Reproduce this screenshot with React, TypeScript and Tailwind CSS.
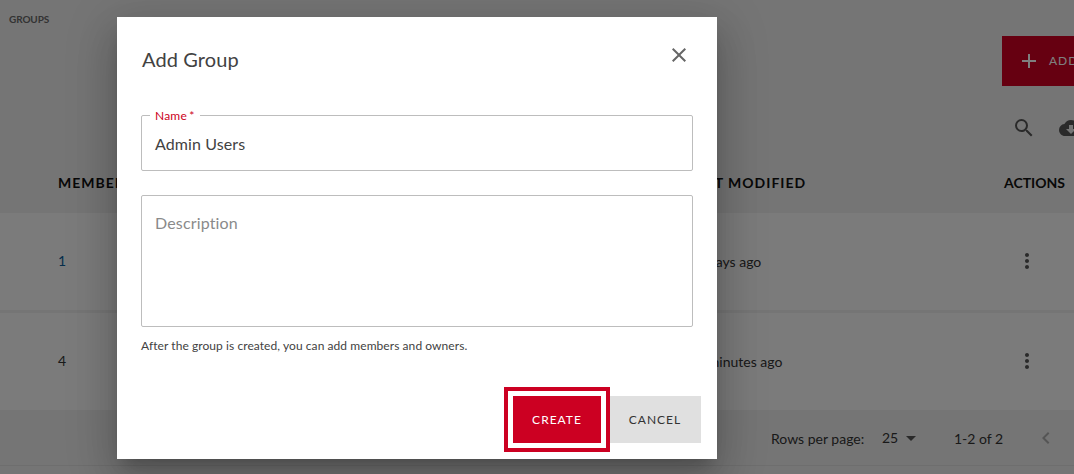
import { MdAdd, MdClose, MdCloudDownload, MdMoreVert, MdSearch, MdArrowDropDown, MdChevronLeft } from "react-icons/md";

const font = { fontFamily: '"Lato", sans-serif' };

function Row({ count, countClass, modified }: { count: string; countClass: string; modified: string }) {
  return (
    <div className="flex h-[97px] items-center bg-[#f7f7f7] pl-[58px] text-sm text-[#333]">
      <div className={`mb-[2px] w-[630px] ${countClass}`}>{count}</div>
      <div className="w-[327px]">{modified}</div>
      <MdMoreVert className="mb-[2px] size-6 text-[#555]" />
    </div>
  );
}

export default function App() {
  return (
    <div className="relative h-[474px] w-[1074px] overflow-hidden bg-[#ebebeb]" style={font}>
      <div className="flex h-[213px] flex-col">
        <div className="pl-[9px] pt-[13px] text-[10px] font-bold leading-[12px] tracking-[-0.1px] text-[#666]">GROUPS</div>
        <div className="ml-[1002px] mt-[11px] flex h-[50px] w-[140px] shrink-0 items-center bg-[#cc0022] pl-[15px] text-xs tracking-[1px] text-white">
          <MdAdd className="size-6 shrink-0" />
          <span className="ml-2">ADD GROUP</span>
        </div>
        <div className="ml-[1012px] mt-[30px] flex shrink-0 gap-[23px] text-[#555]">
          <MdSearch className="size-6 shrink-0" />
          <MdCloudDownload className="size-6 shrink-0" />
        </div>
        <div className="mt-[33px] flex pl-[58px] text-sm font-bold leading-[20px] text-[#111]">
          <div className="w-[629px] tracking-[1px]">MEMBERS</div>
          <div className="w-[317px] tracking-[1px]">LAST MODIFIED</div>
          <div>ACTIONS</div>
        </div>
      </div>
      <Row count="1" countClass="text-[#0a5a96]" modified="12 days ago" />
      <div className="h-[3px]" />
      <Row count="4" countClass="text-[#333]" modified="20 minutes ago" />
      <div className="flex h-[56px] items-center border-b border-[#dcdcdc] pl-[771px] pt-[2px] text-sm text-[#333]">
        <span className="w-[111px]">Rows per page:</span>
        <span className="mb-[2px] w-[18px]">25</span>
        <MdArrowDropDown className="mb-[2px] ml-[-1px] size-6 shrink-0 text-[#555]" />
        <span className="ml-[31px] w-[80px]">1-2 of 2</span>
        <MdChevronLeft className="mb-[2px] size-6 shrink-0 text-[#aaa]" />
      </div>

      <div className="absolute inset-0 bg-black/50" />

      <div className="absolute left-[117px] top-[17px] flex h-[442px] w-[600px] flex-col bg-white shadow-[0_11px_15px_-7px_rgba(0,0,0,0.2),0_24px_38px_3px_rgba(0,0,0,0.14),0_9px_46px_8px_rgba(0,0,0,0.12)]">
        <div className="flex items-start justify-between pl-[25px] pr-[26px] pt-[25px]">
          <h2 className="text-[20px] leading-[34px] tracking-[0.1px] text-[#424242]">Add Group</h2>
          <MdClose className="mt-[1px] size-6 text-[#666]" />
        </div>
        <div className="flex flex-1 flex-col px-6 pt-[39px]">
          <div className="relative flex h-14 items-center rounded-[2px] border border-[#bdbdbd] px-[13px] pt-[2px] text-base tracking-[0.1px] text-[#424242]">
            Admin Users
            <label className="absolute left-2 top-[-8px] bg-white px-[5px] text-xs leading-[15px] tracking-[0.2px] text-[#cc0022] [word-spacing:-1px]">Name *</label>
          </div>
          <div className="mt-6 h-[132px] rounded-[2px] border border-[#bdbdbd] px-[13px] pt-[15px] text-base leading-[24px] tracking-[0.15px] text-[#8a8a8a]">
            Description
          </div>
          <p className="mt-[12px] text-xs leading-[14px] tracking-[0.07px] text-[#424242]">After the group is created, you can add members and owners.</p>
        </div>
        <div className="flex justify-end gap-2 px-4 pb-4">
          <button className="relative z-10 h-[47px] w-[88px] bg-[#cc0022] pt-[1px] text-xs tracking-[1px] text-white outline-[4px] outline-offset-[5px] outline-[#cc0022]">CREATE</button>
          <button className="h-[47px] w-[92px] bg-[#e0e0e0] pt-[1px] text-xs tracking-[1px] text-[#333]">CANCEL</button>
        </div>
      </div>
    </div>
  );
}
